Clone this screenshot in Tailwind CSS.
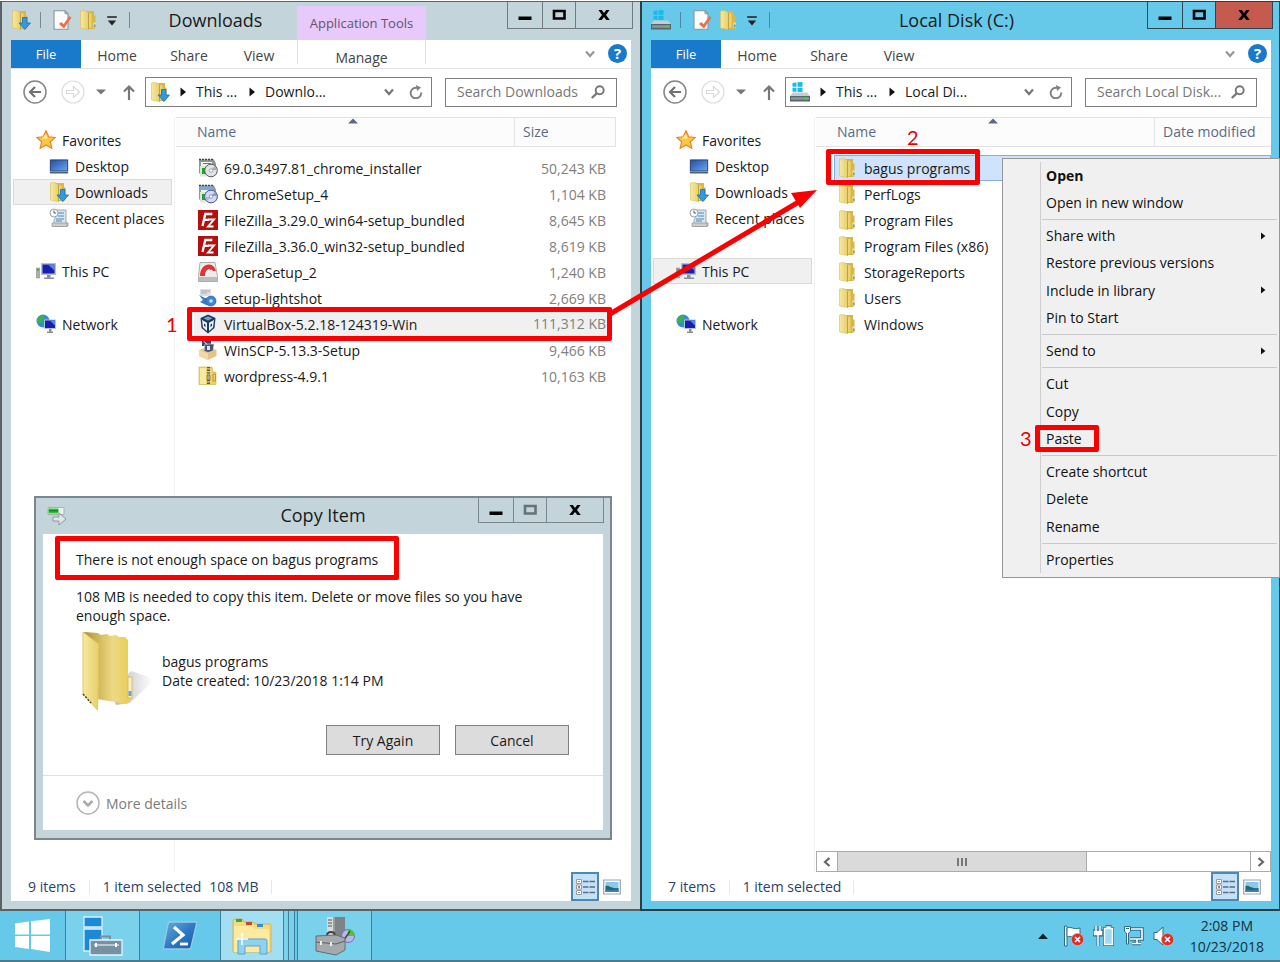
<!DOCTYPE html>
<html lang="en">
<head>
<meta charset="utf-8">
<meta name="viewport" content="width=device-width, initial-scale=1">
<title>Desktop</title>
<script src="https://cdn.jsdelivr.net/npm/@tailwindcss/browser@4"></script>
</head>
<body class="bg-white font-['Open_Sans','Noto_Sans',sans-serif] text-[14px] leading-[19px] text-[#1a1a1a]">

<!-- Shared icons -->
<svg width="0" height="0" class="absolute" aria-hidden="true">
  <defs>
    <linearGradient id="gold" x1="0" x2="1"><stop offset="0" stop-color="#fdf0a8"/><stop offset="1" stop-color="#e3bf4c"/></linearGradient>
    <linearGradient id="leaf" x1="0" x2="1"><stop offset="0" stop-color="#f7e9a0"/><stop offset="1" stop-color="#e8cf6c"/></linearGradient>
    <linearGradient id="gold2" x1="0" x2="1"><stop offset="0" stop-color="#a88c34"/><stop offset=".25" stop-color="#cdb255"/><stop offset=".6" stop-color="#ecd984"/><stop offset="1" stop-color="#e9cc50"/></linearGradient>
    <linearGradient id="screen" x1="0" x2="1" y2="1"><stop offset="0" stop-color="#1f4fa8"/><stop offset="1" stop-color="#6fa5ea"/></linearGradient>
    <linearGradient id="blue" x1="0" x2="1" y2="1"><stop offset="0" stop-color="#6cabdc"/><stop offset=".5" stop-color="#2f7cc4"/><stop offset="1" stop-color="#1456a8"/></linearGradient>
    <symbol id="folder" viewBox="0 0 20 20"><path d="M7 1h8v4.500h1.500V18L15 19H7z" fill="#d8b64a"/><path d="M8.500 2.500l4 1v14l-4 1z" fill="#ecd370"/><path d="M1.500 1L6 .5 9.500 3v16.500L1.500 18z" fill="url(#leaf)" stroke="#d9bd5c" stroke-width=".6"/><path d="M9.500 3v16.500" stroke="#b8983a" stroke-width=".8"/><path d="M14.500 12.500h2.200v5h-2.200z" fill="#f2e6b0"/><path d="M15 14.500h1.500V17H15z" fill="#5f9fa4"/></symbol>
    <symbol id="folderdown" viewBox="0 0 20 20"><use href="#folder" width="20" height="20"/><path d="M11.500 7.500H16v5.500h3.500l-5.700 6.500L8 13h3.500z" fill="#2f9be0" stroke="#1a6cb0" stroke-width=".8"/></symbol>
    <symbol id="star" viewBox="0 0 20 20"><path d="M10 .8l2.700 6 6.500.7-4.800 4.300 1.400 6.600L10 15l-5.800 3.400 1.400-6.600L.8 7.500l6.500-.7z" fill="#fbc740" stroke="#e8822a" stroke-width="1.200"/><path d="M10 4l1.500 4.500H6z" fill="#fff0a0"/></symbol>
    <symbol id="desktop" viewBox="0 0 20 20"><path d="M.5 3h19v14H.5z" fill="#b9c4cf"/><path d="M1.500 4h17v11h-17z" fill="url(#screen)" stroke="#28406e" stroke-width=".8"/><path d="M1 16h18v1.500H1z" fill="#4a6280"/></symbol>
    <symbol id="recent" viewBox="0 0 20 20"><path d="M6 2h11v13h2v3H5v-6l1-1z" fill="#dfe4e8" stroke="#8b959d" stroke-width=".8"/><path d="M3 15h15v3.500H3z" fill="#c9ced2" stroke="#888" stroke-width=".6"/><path d="M9 5h6M9 8h6M7 11h8M7 13h6" stroke="#3a8ccc"/><circle cx="5" cy="5" r="4" fill="#f4f8fa" stroke="#9aa5ad"/><path d="M5 2.500V5h2" fill="none" stroke="#567"/></symbol>
    <symbol id="pc" viewBox="0 0 20 20"><path d="M.5 7h3v10h-3z" fill="#aab2b0" stroke="#777" stroke-width=".5"/><path d="M1 8h2v2H1z" fill="#45b04a"/><path d="M5 2h15v12H5z" fill="#b9bfc6"/><path d="M6.500 3.500h12v9h-12z" fill="#1520b0"/><path d="M12 3.500h6.500v6z" fill="#5b84e8"/><path d="M11 14h3.500v2.500H18V18H8v-1.500h3z" fill="#8c9196"/></symbol>
    <symbol id="network" viewBox="0 0 20 20"><circle cx="7" cy="7" r="6.500" fill="#2f8fd0"/><path d="M2 4c3-4 5-3 6-2s-2 3-1 4-2 3-4 3-3-3-1-5zM8 8c3-1 3 2 2 5H7z" fill="#3cb054"/><path d="M8 5.500h12v9.500H8z" fill="#b9c2d4"/><path d="M9 6.500h10V14H9z" fill="#1520b0"/><path d="M14 6.500h5v5z" fill="#5b84e8"/><path d="M13 15h2.500v2.500H17V19h-6v-1.500h2z" fill="#8c9196"/></symbol>
    <symbol id="disk" viewBox="0 0 20 20"><path d="M2.500 1l4-.6v4.400h-4zM7.500 .3l5-.3v4.800h-5zM2.500 5.700h4v4h-4zM7.500 5.700h5V10h-5z" fill="#18baf0"/><path d="M3 10.500h14l3 3.500H0z" fill="#c7ccd0"/><path d="M0 14h20v5.500H0z" fill="#56646c"/><path d="M1 15.200h18v2.600H1z" fill="#87959c"/><path d="M14 15.700h3.500v1.700H14z" fill="#46d048"/></symbol>
    <symbol id="doc" viewBox="0 0 20 20"><path d="M2 .8h11l3 3v15.400H2z" fill="#fdfdfd" stroke="#8c9297" stroke-width="1.100"/><path d="M13 .8v3h3" fill="none" stroke="#8c9297"/><path d="M7 14l2.200-2 2.300 2.300L17.500 6l2 1.500-7.500 11z" fill="#e8714a"/></symbol>
    <symbol id="chrome" viewBox="0 0 20 20"><path d="M1 1.500h15l2 4V17H3l-2-2z" fill="#8f9a92"/><path d="M3 4h11v4H3z" fill="#f0f2f0"/><path d="M1 1.500h15" stroke="#444" stroke-width="1.300" stroke-dasharray="2 1"/><path d="M5 5.500h8" stroke="#777"/><path d="M2 8h6v10.500H2z" fill="#dfe4df"/><path d="M4 10h3.500v6H4z" fill="#22a722"/><circle cx="13" cy="12.500" r="6.300" fill="#dfe3e5" stroke="#555b5e"/><path d="M13 12l4-4 2 4z" fill="#a3adb8"/><circle cx="13" cy="12.500" r="1.700" fill="#fff" stroke="#777" stroke-width=".6"/></symbol>
    <symbol id="chrome2" viewBox="0 0 20 20"><use href="#chrome" width="20" height="20"/><path d="M2 2.500h13v3.500H2z" fill="#7aaad8"/><circle cx="13" cy="12.500" r="6.300" fill="#d4daf2" stroke="#5666a0"/><path d="M13 12l4-4 2 4z" fill="#8896dc"/><path d="M13 13l-4 4-2-4z" fill="#aab6ea"/><circle cx="13" cy="12.500" r="1.700" fill="#fff" stroke="#667" stroke-width=".6"/></symbol>
    <symbol id="fz" viewBox="0 0 20 20"><path d="M0 0h20v20H0z" fill="#b30f0f"/><path d="M4.500 16L7.300 4h7M5.800 9.800h5.200" fill="none" stroke="#fff" stroke-width="2.300"/><path d="M10 9.500h6l-6 7h5.500" fill="none" stroke="#fff" stroke-width="1.900"/></symbol>
    <symbol id="opera" viewBox="0 0 20 20"><path d="M2 .5h15l2.500 14v5H.5v-5z" fill="#ececec" stroke="#999" stroke-width=".8"/><path d="M1 15h18v4H1z" fill="#bdbdbd"/><path d="M2 14C2 7 6 2.500 11 2.500c4 0 6 3 7 6.500l-3 0c-1-2-5-2-6 5z" fill="#e23330"/><path d="M7 14c0-5 2-7 5-7l-3 7z" fill="#fff"/></symbol>
    <symbol id="lightshot" viewBox="0 0 20 20"><path d="M2 1h11v5l-3 2H2z" fill="#d9dfe4"/><path d="M3 3h9M3 5h6" stroke="#aaa"/><path d="M1 7l6 3 8-1 3 4-5 5-5-1-6-3 3-2z" fill="#3c7cc4"/><circle cx="13" cy="13" r="5" fill="#3f86cf" stroke="#2a62a8" stroke-width=".7"/><circle cx="13" cy="13" r="1.800" fill="#cfe2f6"/></symbol>
    <symbol id="vbox" viewBox="0 0 20 20"><path d="M10 .5l7.500 3.500-1 10-6.500 5.500L3.500 14l-1-10z" fill="#1d3a63"/><path d="M10 2.200l4.500 2L10 6.500 5.500 4.200z" fill="#7f9cc4"/><path d="M4 6l5 2.800V17l-4-3.500zM16 6l-5 2.800V17l4-3.500z" fill="#e8eff8"/><path d="M6 9.500l1.500 1v2.500L6 12zM14 9.500l-1.500 1v2.500l1.500-1z" fill="#1d3a63"/></symbol>
    <symbol id="winscp" viewBox="0 0 20 20"><path d="M1 10l9-3 8.500 3v6L10 20l-9-4z" fill="#e7c283"/><path d="M1 10l9 3.500V20l-9-4z" fill="#f2d9a2"/><path d="M4 0h9v6H4z" fill="#2a4a7c"/><path d="M7 4h9l-1 7-5 1.500L6 11z" fill="#43566e" stroke="#ddd" stroke-width=".6"/><path d="M9 6h3v4H9z" fill="#e0e8f0"/><path d="M6 1.500l3 3" stroke="#fff"/></symbol>
    <symbol id="zip" viewBox="0 0 20 20"><path d="M1 1h13l1 5h3v12.500H1z" fill="#ecd269" stroke="#cfae44" stroke-width=".6"/><path d="M2 2h6v16H2z" fill="#faeb9c"/><path d="M10.500 1v18" stroke="#57574f" stroke-width="3" stroke-dasharray="1.300 1.300"/><path d="M9 9h3v5H9z" fill="#aaa" stroke="#555" stroke-width=".5"/><path d="M15 8h2.500v7H15z" fill="none" stroke="#b8963a"/></symbol>
    <symbol id="min" viewBox="0 0 14 14"><path d="M.5 8.500h13v3.500H.5z" fill="currentColor"/></symbol>
    <symbol id="max" viewBox="0 0 14 14"><path d="M2 3h10.500v7.500H2z" fill="none" stroke="currentColor" stroke-width="2.600"/></symbol>
    <symbol id="close" viewBox="0 0 14 14"><path d="M1.500 2h3.300L7 5l2.200-3h3.300L9 6.900l3.800 5.100H9.300L7 8.900 4.700 12H1.200L5 6.900z" fill="currentColor"/></symbol>
    <symbol id="qat" viewBox="0 0 10 10"><path d="M1 2.500h8" stroke="#222" stroke-width="1.300"/><path d="M1.500 5.500h7L5 9.500z" fill="#222"/></symbol>
    <symbol id="back" viewBox="0 0 24 24"><circle cx="12" cy="12" r="11" fill="#fff" stroke="#858585" stroke-width="1.500"/><path d="M18 12H7.500M12 7l-5 5 5 5" fill="none" stroke="#707070" stroke-width="2.200"/></symbol>
    <symbol id="fwd" viewBox="0 0 24 24"><circle cx="12" cy="12" r="11" fill="none" stroke="#dedede" stroke-width="1.200"/><path d="M5.500 10.500h7V6.500l6 5.500-6 5.500v-4h-7z" fill="none" stroke="#d8d8d8" stroke-width="1.200"/></symbol>
    <symbol id="up" viewBox="0 0 14 16"><path d="M7 16V3M2 7.500l5-5 5 5" fill="none" stroke="#777" stroke-width="2.200"/></symbol>
    <symbol id="down" viewBox="0 0 10 10"><path d="M0 2.500h10L5 7.500z" fill="#777"/></symbol>
    <symbol id="right" viewBox="0 0 10 10"><path d="M2.500 .5v9L8 5z" fill="#111"/></symbol>
    <symbol id="chev" viewBox="0 0 12 12"><path d="M2 3.500l4 4.500 4-4.500" fill="none" stroke="currentColor" stroke-width="2.200"/></symbol>
    <symbol id="reload" viewBox="0 0 14 14"><path d="M12.200 7.500A5.300 5.300 0 1 1 8 2.800" fill="none" stroke="#808080" stroke-width="1.900"/><path d="M7 0l5 2.500L8 6z" fill="#808080"/></symbol>
    <symbol id="lens" viewBox="0 0 14 14"><circle cx="8.700" cy="5.300" r="4" fill="none" stroke="#777" stroke-width="1.900"/><path d="M5.700 8.300L.8 13" stroke="#777" stroke-width="2.300"/></symbol>
    <symbol id="sort" viewBox="0 0 10 6"><path d="M0 5.500L5 .5l5 5z" fill="#5a6a86"/></symbol>
    <symbol id="details" viewBox="0 0 20 18"><path d="M1.500 1.500h5v4h-5zM1.500 7h5v4h-5zM1.500 12.500h5v4h-5z" fill="#fff" stroke="#9a9a9a"/><path d="M3 3.500h2M3 14.500h2" stroke="#69c"/><path d="M3 9h2" stroke="#d33" stroke-width="1.500"/><path d="M8 3.500h12M8 9h12M8 14.500h12" stroke="#5b6b80" stroke-width="1.400" stroke-dasharray="5.500 1"/></symbol>
    <symbol id="thumb" viewBox="0 0 18 16"><path d="M.7 1h16.600v14H.7z" fill="#fff" stroke="#98a5b0" stroke-width="1.200"/><path d="M2.500 3h13v10h-13z" fill="#8cc8ee"/><path d="M2.500 7c4-1 5 3 13 2v4h-13z" fill="#226a74"/><path d="M2.500 11h13v2h-13z" fill="#3f7fae"/></symbol>
    <symbol id="bad" viewBox="0 0 12 12"><circle cx="6" cy="6" r="5.700" fill="#d9302a" stroke="#f2b0ac" stroke-width=".6"/><path d="M3.700 3.700l4.600 4.600M8.300 3.700L3.700 8.300" stroke="#fff" stroke-width="1.600"/></symbol>
  </defs>
</svg>

<div class="flex min-h-screen flex-col">
<main class="relative grid flex-1 grid-cols-2 pt-px">

  <!-- Downloads window -->
  <section aria-label="Downloads" class="relative flex flex-col border-t border-b-2 border-l-2 border-[#5b6265] bg-[#c3d5db] pr-[9px] pb-2 pl-[9px]">
    <header class="flex h-[38px] items-start">
      <div class="flex h-9 items-center gap-[7px] pr-1">
        <svg class="size-5"><use href="#folderdown"/></svg>
        <span class="ml-0.5 h-4 w-px bg-[#7d888c]"></span>
        <button aria-label="Properties" class="ml-1"><svg class="block size-5"><use href="#doc"/></svg></button>
        <button aria-label="New folder"><svg class="block size-5"><use href="#folder"/></svg></button>
        <button aria-label="Customize toolbar"><svg class="block size-3"><use href="#qat"/></svg></button>
        <span class="ml-1 h-4 w-px bg-[#7d888c]"></span>
      </div>
      <h1 class="flex-1 pt-1 text-center text-[18px] leading-7">Downloads</h1>
      <div class="mt-1 h-[34px] w-[129px] bg-[#e8c9fb] pt-2 text-center text-[13px] text-[#62546c]">Application Tools</div>
      <div class="-mr-0.5 ml-[81px] flex h-[27px] border border-t-0 border-[#6f7b80] text-black">
        <button aria-label="Minimize" class="grid w-[35px] place-items-center border-r border-[#6f7b80]"><svg class="size-3.5"><use href="#min"/></svg></button>
        <button aria-label="Maximize" class="grid w-[33px] place-items-center border-r border-[#6f7b80]"><svg class="size-3.5"><use href="#max"/></svg></button>
        <button aria-label="Close" class="grid w-14 place-items-center"><svg class="size-3.5"><use href="#close"/></svg></button>
      </div>
    </header>
    <div class="flex flex-1 flex-col bg-white">
      <nav aria-label="Ribbon" class="flex h-[29px] border-b border-[#e2e3e4] text-[#444]">
        <button class="w-[70px] bg-[#1979ca] text-[13px] text-white">File</button>
        <button class="w-[72px] pt-0.5">Home</button>
        <button class="w-[72px] pt-0.5">Share</button>
        <button class="w-[68px] pt-0.5">View</button>
        <button class="ml-1 h-6 w-[129px] border-x border-[#e2e3e4] pt-2">Manage</button>
        <span class="flex-1"></span>
        <button aria-label="Expand ribbon" class="mr-3 text-[#999]"><svg class="size-3"><use href="#chev"/></svg></button>
        <button aria-label="Help" class="mt-1 mr-1 size-[19px] rounded-full bg-[#1979ca] text-[15px] leading-[19px] font-bold text-white">?</button>
      </nav>
      <div class="mb-0.5 flex h-[46px] items-center pr-[14px] pl-3">
        <button aria-label="Back"><svg class="block size-6"><use href="#back"/></svg></button>
        <button aria-label="Forward" class="ml-[14px]"><svg class="block size-6"><use href="#fwd"/></svg></button>
        <button aria-label="Recent locations" class="ml-[11px]"><svg class="block size-2.5"><use href="#down"/></svg></button>
        <button aria-label="Up" class="ml-4"><svg class="block h-4 w-3.5"><use href="#up"/></svg></button>
        <div class="ml-[9px] flex h-[30px] min-w-0 flex-1 items-center border border-[#7f7f7f] pr-2 pb-px pl-1">
          <svg class="size-5 shrink-0"><use href="#folderdown"/></svg>
          <svg class="ml-2 size-2.5"><use href="#right"/></svg>
          <button class="ml-2 w-[43px] text-left">This ...</button>
          <svg class="ml-2 size-2.5"><use href="#right"/></svg>
          <button class="ml-2">Downlo...</button>
          <span class="flex-1"></span>
          <button aria-label="History" class="text-[#777]"><svg class="block size-3"><use href="#chev"/></svg></button>
          <button aria-label="Refresh" class="ml-[14px]"><svg class="block size-3.5"><use href="#reload"/></svg></button>
        </div>
        <label class="ml-[13px] flex h-[29px] w-[172px] items-center border border-[#7f7f7f] pr-[11px] pb-px pl-[11px]">
          <input type="search" aria-label="Search Downloads" placeholder="Search Downloads" class="-mr-1 min-w-0 flex-1 outline-none placeholder:text-[#777]">
          <svg class="size-3.5"><use href="#lens"/></svg>
        </label>
      </div>
      <div class="flex flex-1">
        <nav aria-label="Folders" class="w-[164px] border-r border-[#f1f1f1] pt-2.5 pr-0.5 pl-0.5">
          <a href="#" class="flex h-[26px] items-center gap-1.5 pl-[23px]"><svg class="size-5"><use href="#star"/></svg>Favorites</a>
          <a href="#" class="flex h-[26px] items-center gap-1.5 pl-9"><svg class="size-5"><use href="#desktop"/></svg>Desktop</a>
          <a href="#" class="flex h-[26px] items-center gap-1.5 border border-[#dadada] bg-[#f0f0f0] pl-[35px]"><svg class="size-5"><use href="#folderdown"/></svg>Downloads</a>
          <a href="#" class="flex h-[26px] items-center gap-1.5 pl-9 whitespace-nowrap"><svg class="size-5"><use href="#recent"/></svg>Recent places</a>
          <a href="#" class="mt-[27px] flex h-[26px] items-center gap-1.5 pl-[23px]"><svg class="size-5"><use href="#pc"/></svg>This PC</a>
          <a href="#" class="mt-[27px] flex h-[26px] items-center gap-1.5 pl-[23px]"><svg class="size-5"><use href="#network"/></svg>Network</a>
        </nav>
        <div class="flex-1 pr-[15px] pl-px">
          <table class="w-full border-separate border-spacing-0">
            <thead>
              <tr class="h-[30px] bg-[#fcfcfc] text-left text-[#5a6a86]">
                <th class="relative border-y border-r border-[#e2e3e4] pb-px pl-[21px] font-normal">Name<svg class="absolute top-0 left-[172px] h-1.5 w-2.5"><use href="#sort"/></svg></th>
                <th class="w-[101px] border-y border-r border-[#e2e3e4] pb-px pl-2 font-normal">Size</th>
              </tr>
            </thead>
            <tbody class="before:block before:h-2">
              <tr class="h-[26px]"><td><div class="flex items-center gap-1.5 pl-[22px]"><svg class="size-5"><use href="#chrome"/></svg>69.0.3497.81_chrome_installer</div></td><td class="pr-2.5 text-right text-[#808080]">50,243 KB</td></tr>
              <tr class="h-[26px]"><td><div class="flex items-center gap-1.5 pl-[22px]"><svg class="size-5"><use href="#chrome2"/></svg>ChromeSetup_4</div></td><td class="pr-2.5 text-right text-[#808080]">1,104 KB</td></tr>
              <tr class="h-[26px]"><td><div class="flex items-center gap-1.5 pl-[22px]"><svg class="size-5"><use href="#fz"/></svg>FileZilla_3.29.0_win64-setup_bundled</div></td><td class="pr-2.5 text-right text-[#808080]">8,645 KB</td></tr>
              <tr class="h-[26px]"><td><div class="flex items-center gap-1.5 pl-[22px]"><svg class="size-5"><use href="#fz"/></svg>FileZilla_3.36.0_win32-setup_bundled</div></td><td class="pr-2.5 text-right text-[#808080]">8,619 KB</td></tr>
              <tr class="h-[26px]"><td><div class="flex items-center gap-1.5 pl-[22px]"><svg class="size-5"><use href="#opera"/></svg>OperaSetup_2</div></td><td class="pr-2.5 text-right text-[#808080]">1,240 KB</td></tr>
              <tr class="h-[26px]"><td><div class="flex items-center gap-1.5 pl-[22px]"><svg class="size-5"><use href="#lightshot"/></svg>setup-lightshot</div></td><td class="pr-2.5 text-right text-[#808080]">2,669 KB</td></tr>
              <tr class="relative h-[26px]"><td><div class="ml-[18px] flex h-[26px] items-center gap-1.5 bg-[#f0f0f0] pl-1"><svg class="size-5"><use href="#vbox"/></svg>VirtualBox-5.2.18-124319-Win</div></td><td class="text-right text-[#808080]"><div class="mr-2 h-[26px] bg-[#f0f0f0] pr-0.5 leading-[26px]">111,312 KB</div><span class="absolute -top-1 right-1 -bottom-1 left-[11px] rounded-xs border-5 border-[#fb0000]"></span><span class="absolute top-1 -left-2.5 font-['Lato',sans-serif] text-[20px] text-[#e80000]">1</span></td></tr>
              <tr class="h-[26px]"><td><div class="flex items-center gap-1.5 pl-[22px]"><svg class="size-5"><use href="#winscp"/></svg>WinSCP-5.13.3-Setup</div></td><td class="pr-2.5 text-right text-[#808080]">9,466 KB</td></tr>
              <tr class="h-[26px]"><td><div class="flex items-center gap-1.5 pl-[22px]"><svg class="size-5"><use href="#zip"/></svg>wordpress-4.9.1</div></td><td class="pr-2.5 text-right text-[#808080]">10,163 KB</td></tr>
            </tbody>
          </table>
        </div>
      </div>
      <footer class="flex h-[29px] items-center pr-2.5 pl-[17px] text-[#2b3f6b]">
        <span>9 items</span><span class="mx-[13px] h-3.5 w-px bg-[#e6e6ee]"></span><span>1 item selected</span><span class="ml-2">108 MB</span><span class="ml-3 h-3.5 w-px bg-[#e6e6ee]"></span>
        <span class="flex-1"></span>
        <button aria-label="Details view" class="grid h-[29px] w-7 place-items-center border-2 border-[#4f86b4] bg-[#c4e2f7]"><svg class="h-[18px] w-5"><use href="#details"/></svg></button>
        <button aria-label="Thumbnail view" class="ml-1"><svg class="block h-4 w-[18px]"><use href="#thumb"/></svg></button>
      </footer>
    </div>
  </section>

  <!-- Local Disk window -->
  <section aria-label="Local Disk (C:)" class="relative flex flex-col border-t border-r border-b-2 border-l-2 border-[#2b3d45] bg-[#66c9e9] pr-2 pb-2 pl-[9px]">
    <header class="flex h-[38px] items-start">
      <div class="flex h-9 items-center gap-[7px]">
        <svg class="size-5"><use href="#disk"/></svg>
        <span class="ml-0.5 h-4 w-px bg-[#4a8ba1]"></span>
        <button aria-label="Properties" class="ml-1"><svg class="block size-5"><use href="#doc"/></svg></button>
        <button aria-label="New folder"><svg class="block size-5"><use href="#folder"/></svg></button>
        <button aria-label="Customize toolbar"><svg class="block size-3"><use href="#qat"/></svg></button>
        <span class="ml-1 h-4 w-px bg-[#4a8ba1]"></span>
      </div>
      <h1 class="flex-1 pt-1 pr-1 text-center text-[18px] leading-7">Local Disk (C:)</h1>
      <div class="-mr-0.5 flex h-[27px] border border-t-0 border-[#2c4853] text-black">
        <button aria-label="Minimize" class="grid w-[35px] place-items-center border-r border-[#2c4853]"><svg class="size-3.5"><use href="#min"/></svg></button>
        <button aria-label="Maximize" class="grid w-[33px] place-items-center border-r border-[#2c4853]"><svg class="size-3.5"><use href="#max"/></svg></button>
        <button aria-label="Close" class="grid w-14 place-items-center bg-[#c55a4e]"><svg class="size-3.5"><use href="#close"/></svg></button>
      </div>
    </header>
    <div class="flex flex-1 flex-col bg-white">
      <nav aria-label="Ribbon" class="flex h-[29px] border-b border-[#e2e3e4] text-[#444]">
        <button class="w-[70px] bg-[#1979ca] text-[13px] text-white">File</button>
        <button class="w-[72px] pt-0.5">Home</button>
        <button class="w-[72px] pt-0.5">Share</button>
        <button class="w-[68px] pt-0.5">View</button>
        <span class="flex-1"></span>
        <button aria-label="Expand ribbon" class="mr-3 text-[#999]"><svg class="size-3"><use href="#chev"/></svg></button>
        <button aria-label="Help" class="mt-1 mr-1 size-[19px] rounded-full bg-[#1979ca] text-[15px] leading-[19px] font-bold text-white">?</button>
      </nav>
      <div class="mb-0.5 flex h-[46px] items-center pr-[14px] pl-3">
        <button aria-label="Back"><svg class="block size-6"><use href="#back"/></svg></button>
        <button aria-label="Forward" class="ml-[14px]"><svg class="block size-6"><use href="#fwd"/></svg></button>
        <button aria-label="Recent locations" class="ml-[11px]"><svg class="block size-2.5"><use href="#down"/></svg></button>
        <button aria-label="Up" class="ml-4"><svg class="block h-4 w-3.5"><use href="#up"/></svg></button>
        <div class="ml-[9px] flex h-[30px] min-w-0 flex-1 items-center border border-[#7f7f7f] pr-2 pb-px pl-1">
          <svg class="size-5 shrink-0"><use href="#disk"/></svg>
          <svg class="ml-2 size-2.5"><use href="#right"/></svg>
          <button class="ml-2 w-[43px] text-left">This ...</button>
          <svg class="ml-2 size-2.5"><use href="#right"/></svg>
          <button class="ml-2">Local Di...</button>
          <span class="flex-1"></span>
          <button aria-label="History" class="text-[#777]"><svg class="block size-3"><use href="#chev"/></svg></button>
          <button aria-label="Refresh" class="ml-[14px]"><svg class="block size-3.5"><use href="#reload"/></svg></button>
        </div>
        <label class="ml-[13px] flex h-[29px] w-[172px] items-center border border-[#7f7f7f] pr-[11px] pb-px pl-[11px]">
          <input type="search" aria-label="Search Local Disk" placeholder="Search Local Disk..." class="-mr-1 min-w-0 flex-1 outline-none placeholder:text-[#777]">
          <svg class="size-3.5"><use href="#lens"/></svg>
        </label>
      </div>
      <div class="flex flex-1">
        <nav aria-label="Folders" class="w-[164px] border-r border-[#f1f1f1] pt-2.5 pr-0.5 pl-0.5">
          <a href="#" class="flex h-[26px] items-center gap-1.5 pl-[23px]"><svg class="size-5"><use href="#star"/></svg>Favorites</a>
          <a href="#" class="flex h-[26px] items-center gap-1.5 pl-9"><svg class="size-5"><use href="#desktop"/></svg>Desktop</a>
          <a href="#" class="flex h-[26px] items-center gap-1.5 pl-9"><svg class="size-5"><use href="#folderdown"/></svg>Downloads</a>
          <a href="#" class="flex h-[26px] items-center gap-1.5 pl-9 whitespace-nowrap"><svg class="size-5"><use href="#recent"/></svg>Recent places</a>
          <a href="#" class="mt-[27px] flex h-[26px] items-center gap-1.5 border border-[#dadada] bg-[#f0f0f0] pl-[22px]"><svg class="size-5"><use href="#pc"/></svg>This PC</a>
          <a href="#" class="mt-[27px] flex h-[26px] items-center gap-1.5 pl-[23px]"><svg class="size-5"><use href="#network"/></svg>Network</a>
        </nav>
        <div class="flex min-w-0 flex-1 flex-col justify-between pl-px">
          <table class="w-full border-separate border-spacing-0">
            <thead>
              <tr class="h-[30px] bg-[#fcfcfc] text-left text-[#5a6a86]">
                <th class="relative border-y border-r border-[#e2e3e4] pb-px pl-[21px] font-normal">Name<svg class="absolute top-0 left-[172px] h-1.5 w-2.5"><use href="#sort"/></svg><span class="absolute top-2.5 left-[91px] font-['Lato',sans-serif] text-[20px] text-[#e80000]">2</span></th>
                <th class="w-[116px] border-y border-[#e2e3e4] pb-px pl-2 font-normal whitespace-nowrap">Date modified</th>
              </tr>
            </thead>
            <tbody class="before:block before:h-2">
              <tr class="h-[26px]"><td colspan="2" class="relative"><div class="ml-[18px] flex h-[26px] items-center gap-1.5 border border-[#84acdd] bg-[#cfe3fc] pl-[3px]"><svg class="size-5"><use href="#folder"/></svg>bagus programs</div><span class="absolute -top-1.5 -bottom-1 left-2.5 w-[154px] rounded-xs border-5 border-[#fb0000]"></span></td></tr>
              <tr class="h-[26px]"><td colspan="2"><div class="flex items-center gap-1.5 pl-[22px]"><svg class="size-5"><use href="#folder"/></svg>PerfLogs</div></td></tr>
              <tr class="h-[26px]"><td colspan="2"><div class="flex items-center gap-1.5 pl-[22px]"><svg class="size-5"><use href="#folder"/></svg>Program Files</div></td></tr>
              <tr class="h-[26px]"><td colspan="2"><div class="flex items-center gap-1.5 pl-[22px]"><svg class="size-5"><use href="#folder"/></svg>Program Files (x86)</div></td></tr>
              <tr class="h-[26px]"><td colspan="2"><div class="flex items-center gap-1.5 pl-[22px]"><svg class="size-5"><use href="#folder"/></svg>StorageReports</div></td></tr>
              <tr class="h-[26px]"><td colspan="2"><div class="flex items-center gap-1.5 pl-[22px]"><svg class="size-5"><use href="#folder"/></svg>Users</div></td></tr>
              <tr class="h-[26px]"><td colspan="2"><div class="flex items-center gap-1.5 pl-[22px]"><svg class="size-5"><use href="#folder"/></svg>Windows</div></td></tr>
            </tbody>
          </table>
          <div class="flex h-[21px] border border-[#ababab] text-[#666]">
            <button aria-label="Scroll left" class="grid w-5 place-items-center"><svg class="size-3 rotate-90"><use href="#chev"/></svg></button>
            <div class="flex w-[250px] items-center justify-center gap-0.5 border-x border-[#ababab] bg-[#dadada]"><span class="h-2 w-0.5 bg-[#777]"></span><span class="h-2 w-0.5 bg-[#777]"></span><span class="h-2 w-0.5 bg-[#777]"></span></div>
            <span class="flex-1"></span>
            <button aria-label="Scroll right" class="grid w-5 place-items-center border-l border-[#ababab]"><svg class="size-3 -rotate-90"><use href="#chev"/></svg></button>
          </div>
        </div>
      </div>
      <footer class="flex h-[29px] items-center pr-2.5 pl-[17px] text-[#2b3f6b]">
        <span>7 items</span><span class="mx-[13px] h-3.5 w-px bg-[#e6e6ee]"></span><span>1 item selected</span><span class="ml-3 h-3.5 w-px bg-[#e6e6ee]"></span>
        <span class="flex-1"></span>
        <button aria-label="Details view" class="grid h-[29px] w-7 place-items-center border-2 border-[#4f86b4] bg-[#c4e2f7]"><svg class="h-[18px] w-5"><use href="#details"/></svg></button>
        <button aria-label="Thumbnail view" class="ml-1"><svg class="block h-4 w-[18px]"><use href="#thumb"/></svg></button>
      </footer>
    </div>
  </section>

  <!-- Arrow from the installer to its target folder -->
  <svg class="pointer-events-none absolute top-[180px] left-[600px]" width="220" height="140" viewBox="0 0 220 140" aria-hidden="true"><path d="M10 134L202 20" stroke="#fb0000" stroke-width="5"/><path d="M217 10l-17 18-9-15z" fill="#fb0000"/></svg>

  <!-- Copy dialog -->
  <section role="dialog" aria-label="Copy Item" class="absolute top-[496px] left-[34px] flex w-[578px] flex-col border-2 border-[#7b878c] bg-[#c3d5db] px-[7px] pb-2">
    <header class="relative flex h-9 items-start justify-end">
      <svg class="absolute top-2 left-1 h-5 w-5" viewBox="0 0 20 20"><path d="M1 1.500h16v7H1z" fill="#eef2ee" stroke="#a9b5ac"/><path d="M1.500 2.500h10v5h-10z" fill="#2cc43c"/><path d="M2 4h9v1.500H2z" fill="#0e8a20"/><path d="M6 11h6V7l7 6-7 6v-4H6z" fill="#e3e6e8" stroke="#8f989d" stroke-width="1"/></svg>
      <h2 class="absolute inset-x-0 top-1 text-center text-[18px] leading-[26px]">Copy Item</h2>
      <div class="relative -mr-px flex h-[25px] border border-t-0 border-[#7b878c] text-black">
        <button aria-label="Minimize" class="grid w-[35px] place-items-center border-r border-[#7b878c]"><svg class="size-3.5"><use href="#min"/></svg></button>
        <button aria-label="Maximize" disabled class="grid w-[33px] place-items-center border-r border-[#7b878c] text-[#667276]"><svg class="size-3.5"><use href="#max"/></svg></button>
        <button aria-label="Close" class="grid w-14 place-items-center"><svg class="size-3.5"><use href="#close"/></svg></button>
      </div>
    </header>
    <div class="flex flex-col bg-white">
      <div class="pt-4 pr-[34px] pl-[33px]">
        <p class="relative w-max">There is not enough space on bagus programs<span class="absolute -top-[14px] -bottom-[11px] -left-[21px] w-[344px] rounded-xs border-5 border-[#fb0000]"></span></p>
        <p class="mt-[18px]">108 MB is needed to copy this item. Delete or move files so you have<br>enough space.</p>
        <div class="mt-1 flex items-center pl-1">
          <svg class="h-[84px] w-[76px]" viewBox="0 0 76 84"><defs><linearGradient id="shade" x1="0" x2="1"><stop offset="0" stop-color="#777"/><stop offset="1" stop-color="#fff"/></linearGradient></defs><path d="M36 76l14-2 23-22-4-4-18-6-20 20z" fill="url(#shade)" opacity=".55"/><path d="M4 3l14 1 3 2 6-1 3 2 6-1 3 2 6 0 3 3v36l4 2v20l-5 6-30-5z" fill="url(#gold2)"/><path d="M48 48h4v21h-4z" fill="#f5efd0" stroke="#d9b23c" stroke-width=".7"/><path d="M48.500 62h3v5h-3z" fill="#6ba6c8"/><path d="M3 3l15.500 12v36l-1 30L3 65z" fill="url(#leaf)" stroke="#e3c65c"/><path d="M3 65l8 9" stroke="#4a4020" stroke-width="1.500" stroke-dasharray="2 1.500"/></svg>
          <p class="ml-1.5">bagus programs<br>Date created: 10/23/2018 1:14 PM</p>
        </div>
        <div class="mt-3 flex justify-end gap-[15px]">
          <button class="h-[30px] w-[114px] border border-[#808080] bg-[#dcdcdc]">Try Again</button>
          <button class="h-[30px] w-[114px] border border-[#808080] bg-[#dcdcdc]">Cancel</button>
        </div>
      </div>
      <div class="mt-5 flex h-[55px] items-center border-t border-[#dfdfdf] pl-[33px]">
        <button class="flex items-center gap-1.5 text-[#7a7a7a]"><svg class="size-6" viewBox="0 0 24 24"><circle cx="12" cy="12" r="11" fill="#fff" stroke="#b5b5b5" stroke-width="1.500"/><path d="M7.500 10l4.500 4.500L16.500 10" fill="none" stroke="#aaa" stroke-width="2.500"/></svg>More details</button>
      </div>
    </div>
  </section>

  <!-- Context menu -->
  <div role="menu" class="absolute top-[158px] right-0 flex w-[278px] flex-col border border-[#979797] bg-[#f0f0f0] pt-[3px] pr-0.5 pb-1 pl-[37px]">
    <div class="flex flex-col border-l border-[#cfcfcf] pl-px text-[#111]">
      <button role="menuitem" class="h-[27px] pl-1 text-left font-bold">Open</button>
      <button role="menuitem" class="h-[27px] pl-1 text-left">Open in new window</button>
      <hr class="mt-[3px] mb-0.5 border-t-1 border-[#c9c9c9]">
      <button role="menuitem" class="flex h-[27px] items-center justify-between pr-2.5 pl-1">Share with<svg class="size-2"><use href="#right"/></svg></button>
      <button role="menuitem" class="h-[27px] pl-1 text-left">Restore previous versions</button>
      <button role="menuitem" class="flex h-7 items-center justify-between pr-2.5 pl-1">Include in library<svg class="size-2"><use href="#right"/></svg></button>
      <button role="menuitem" class="h-[27px] pl-1 text-left">Pin to Start</button>
      <hr class="mt-[3px] mb-0.5 border-t-1 border-[#c9c9c9]">
      <button role="menuitem" class="flex h-[27px] items-center justify-between pr-2.5 pl-1">Send to<svg class="size-2"><use href="#right"/></svg></button>
      <hr class="mt-[3px] mb-0.5 border-t-1 border-[#c9c9c9]">
      <button role="menuitem" class="h-[27px] pl-1 text-left">Cut</button>
      <button role="menuitem" class="h-7 pl-1 text-left">Copy</button>
      <button role="menuitem" class="relative h-[27px] pl-1 text-left">Paste<span class="absolute inset-y-0 -left-[7px] w-16 rounded-xs border-5 border-[#fb0000]"></span><span aria-hidden="true" class="absolute top-1 -left-[22px] font-['Lato',sans-serif] text-[20px] text-[#e80000]">3</span></button>
      <hr class="mt-[3px] mb-0.5 border-t-1 border-[#c9c9c9]">
      <button role="menuitem" class="h-[27px] pl-1 text-left">Create shortcut</button>
      <button role="menuitem" class="h-[27px] pl-1 text-left">Delete</button>
      <button role="menuitem" class="h-7 pl-1 text-left">Rename</button>
      <hr class="mt-[3px] mb-0.5 border-t-1 border-[#c9c9c9]">
      <button role="menuitem" class="h-[27px] pl-1 text-left">Properties</button>
    </div>
  </div>
</main>

<!-- Taskbar -->
<footer class="flex h-[51px] items-stretch border-b-2 border-[#51798a] bg-[#66c9e9]">
  <button aria-label="Start" class="grid w-[65px] place-items-center"><svg class="h-[33px] w-[35px]" viewBox="0 0 35 33"><path d="M0 4.500L14 2.500v13H0zM16 2.200L35 0v15.500H16zM0 17h14v13L0 28zM16 17h19v16l-19-3z" fill="#fff"/></svg></button>
  <button aria-label="Server Manager" class="grid w-[75px] place-items-center border-x border-[#3f8096] bg-[#7ad1ec]"><svg class="h-10 w-10" viewBox="0 0 40 40"><path d="M1 1h18v10H1zM1 13h18v22H1z" fill="#1e88d8" stroke="#d8f2fc" stroke-width="1.300"/><path d="M18 24v-3.500h9V24" fill="none" stroke="#7791a2" stroke-width="2"/><path d="M7 24h32v15H7z" fill="#7791a2" stroke="#e6f6fc" stroke-width="1.300"/><path d="M11 29h25" stroke="#fff" stroke-width="1"/><path d="M13 27v4M33 27v4" stroke="#fff" stroke-width="2"/></svg></button>
  <button aria-label="PowerShell" class="grid w-20 place-items-center"><svg class="h-8 w-9" viewBox="0 0 36 32"><path d="M8 2h25q2 0 1.500 2L29 27q-.5 2-2.500 2H3q-2 0-1.500-2L6 4q.5-2 2-2z" fill="url(#blue)" stroke="#9cc8ea" stroke-width="1.300"/><path d="M12 7l9 8-11 9" fill="none" stroke="#fff" stroke-width="3.200"/><path d="M18 24h8" stroke="#fff" stroke-width="2.800"/></svg></button>
  <button aria-label="File Explorer" class="flex w-[75px] border-l border-[#3f8096] bg-[#a2dff3]">
    <span class="grid h-full w-[63px] place-items-center border-r border-[#3f8096]"><svg class="h-[38px] w-[42px]" viewBox="0 0 42 38"><path d="M2 4q0-2 2-2h7l2 3h9l2 2h14q2 0 2 2v26H2z" fill="#f4dc7a" stroke="#d5b352"/><path d="M5 2h6v3H5z" fill="#2fa84a"/><path d="M15 5h6v3h-6z" fill="#c6482a"/><path d="M26 7h6v3h-6z" fill="#3a8cd0"/><path d="M3 9h18l3 3h14v23H3z" fill="#fbeaa0"/><path d="M7 37V24q0-2 2-2h25q2 0 2 2v13h-7v-8H14v8z" fill="#8fd2f0" stroke="#5aa2cc"/><path d="M11 16v12M5 22h12" stroke="#fff" stroke-width="1.500"/></svg></span>
    <span class="h-full w-[5px] border-r border-[#3f8096] bg-[#7ad1ec]"></span>
    <span class="h-full w-[6px] border-r border-[#3f8096] bg-[#7ad1ec]"></span>
  </button>
  <button aria-label="Computer Management" class="ml-0.5 grid w-[75px] place-items-center border-x border-[#3f8096] bg-[#7ad1ec]"><svg class="h-10 w-10" viewBox="0 0 40 40"><path d="M12 1h18v26H12z" fill="#9a9fa2"/><path d="M12 1h6v26h-6z" fill="#d8dbdc"/><path d="M13 4h4M13 7h4M13 10h4" stroke="#555"/><path d="M20 1h10v26H20z" fill="#7d8386"/><circle cx="33" cy="20" r="6.500" fill="#b9b8e6" stroke="#6a6cc0"/><path d="M33 20v-7q7 1 7 7z" fill="#52c43a"/><path d="M29 24l6-9" stroke="#445" stroke-width="1.500"/><path d="M12 20q0-4 4-4t4 4" fill="none" stroke="#444" stroke-width="2"/><path d="M1 20l20-1 9 3v12l-9 5-20-4z" fill="#a4a9ac" stroke="#666d70"/><path d="M1 26l20 2 9-3" fill="none" stroke="#5a6063"/><path d="M6 25v4M16 26v4" stroke="#eee" stroke-width="2"/></svg></button>
  <span class="flex-1"></span>
  <div class="flex items-center gap-[9px]">
    <button aria-label="Show hidden icons" class="mr-1.5"><svg class="block h-1.5 w-2.5" viewBox="0 0 10 6"><path d="M0 6l5-5.500L10 6z" fill="#122"/></svg></button>
    <button aria-label="Action Center"><svg class="block h-[22px] w-[21px]" viewBox="0 0 21 22"><path d="M1.500 1h2.500v20H1.500z" fill="#fff" stroke="#2f6b82"/><path d="M4 3c4-2 6 2 13 0v9c-6 2-9-2-13 0z" fill="#fff" stroke="#2f6b82"/><use href="#bad" x="8" y="8" width="13" height="13"/></svg></button>
    <button aria-label="Power"><svg class="block h-[22px] w-[21px]" viewBox="0 0 21 22"><path d="M3 1v5M7 1v5M1 6h8v4H1zM5 10v11" fill="none" stroke="#2f6b82" stroke-width="3"/><path d="M3 1v5M7 1v5M1.500 6.500h7v3h-7zM5 10v11" fill="#fff" stroke="#fff" stroke-width="1.500"/><path d="M11.500 3.500h8v16h-8zM14 1.500h3v2h-3z" fill="none" stroke="#2f6b82" stroke-width="3"/><path d="M11.500 3.500h8v16h-8zM14 2h3v1.500h-3z" fill="#9bdcf2" stroke="#fff" stroke-width="1.500"/></svg></button>
    <button aria-label="Network"><svg class="block h-[22px] w-[21px]" viewBox="0 0 21 22"><path d="M7 4h12v10H7M14 14v4M9 18.500h9" fill="none" stroke="#2f6b82" stroke-width="3.500"/><path d="M7 4h12v10H7M14 14v4M9 18.500h9" fill="none" stroke="#fff" stroke-width="1.600"/><path d="M1.500 1.500h6v5L5.500 8v11h-2V8l-2-1.500z" fill="#fff" stroke="#2f6b82"/><path d="M3 3.500h3" stroke="#2f6b82"/></svg></button>
    <button aria-label="Volume"><svg class="block h-[22px] w-[21px]" viewBox="0 0 21 22"><path d="M1 7.500h3L10 2v18l-6-5.500H1z" fill="#fff" stroke="#2f6b82"/><use href="#bad" x="8" y="8" width="13" height="13"/></svg></button>
  </div>
  <time class="ml-4 pt-1 pr-4 text-center leading-[21px] text-[#12303c]">2:08 PM<br>10/23/2018</time>
</footer>
</div>
</body>
</html>
